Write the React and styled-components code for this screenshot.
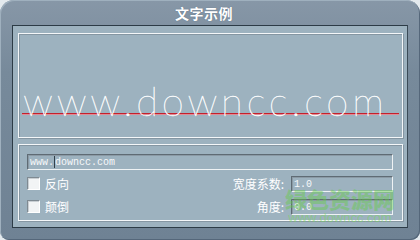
import React from "react";
import styled, { createGlobalStyle } from "styled-components";

const Global = createGlobalStyle`
  html, body {
    margin: 0;
    padding: 0;
    background: #e4eaee;
  }
  * { box-sizing: border-box; }
`;

const Window = styled.div`
  position: relative;
  width: 420px;
  height: 240px;
  border-radius: 14px 14px 9px 9px;
  background: linear-gradient(#8797a7, #778a9b 30%, #6f8294);
  box-shadow: inset 1px 1px 0 #9fb0be, inset -1px -1px 0 #55677a;
  padding: 0 12px 12px 12px;
  display: flex;
  flex-direction: column;
  overflow: hidden;
`;

const Title = styled.div`
  height: 25px;
  display: flex;
  align-items: center;
  justify-content: center;
  padding-right: 12px;
  color: #ffffff;
  font-family: "Noto Sans CJK SC", sans-serif;
  font-weight: 700;
  font-size: 14px;
  letter-spacing: 0.5px;
  text-shadow: 0 0 1px #55677a;
`;

const Panel = styled.div`
  flex: 1;
  background: #9db2bf;
  border: 1px solid #2c3b46;
  border-right-color: #3a4a56;
  padding: 7px 4px 6px 5px;
  display: flex;
  flex-direction: column;
  gap: 6px;
`;

const Group = styled.div`
  border: 1px solid #f4f7f9;
  box-shadow: inset 1px 1px 0 #8596a2, 1px 1px 0 #8596a2;
  height: ${(p) => p.h}px;
`;

const Preview = styled(Group)`
  display: flex;
  flex-direction: column;
  justify-content: flex-end;
  padding: 0 0 23px 3px;
`;

const Sample = styled.div`
  width: 377px;
  height: 36px;
  padding-left: 1px;
  font-family: Lato, "DejaVu Sans", sans-serif;
  font-weight: 100;
  font-size: 40px;
  letter-spacing: 3.8px;
  color: #ffffff;
  -webkit-text-stroke: 0.35px #ffffff;
  white-space: nowrap;
  border-bottom: 1px solid #c4202c;
  box-shadow: 0 1px 0 #e08a94;
  display: flex;
  align-items: flex-end;
`;

const SampleText = styled.span`
  display: block;
  line-height: 1;
  margin-bottom: -8px;
`;

const Controls = styled(Group)`
  padding: 9px 9px 0 8px;
  display: flex;
  flex-direction: column;
`;

const TextBox = styled.div`
  height: 16px;
  border: 1px solid;
  border-color: #5f6b74 #eef2f4 #eef2f4 #5f6b74;
  box-shadow: inset 1px 1px 0 #8b9aa5;
  display: flex;
  align-items: center;
  padding-left: 2px;
  font-family: "Liberation Mono", monospace;
  font-size: 10px;
  color: #f6f8fa;
`;

const Caret = styled.span`
  display: inline-block;
  width: 1px;
  height: 12px;
  background: #30404a;
`;

const Rows = styled.div`
  margin-top: 6px;
  display: grid;
  grid-template-columns: 1fr 102px;
  grid-auto-rows: 15px;
  row-gap: 8px;
`;

const Left = styled.div`
  display: flex;
  align-items: center;
  justify-content: space-between;
  padding-right: 7px;
`;

const Check = styled.label`
  display: flex;
  align-items: center;
  gap: 5px;
  font-family: "Noto Sans CJK SC", sans-serif;
  font-size: 12px;
  color: #ffffff;
`;

const Box = styled.span`
  width: 13px;
  height: 13px;
  background: #f2f4f5;
  border: 1px solid;
  border-color: #7f8a92 #ffffff #ffffff #7f8a92;
  box-shadow: inset 1px 1px 0 #c9cfd3;
`;

const FieldLabel = styled.span`
  font-family: "Noto Sans CJK SC", sans-serif;
  font-size: 12px;
  color: #ffffff;
`;

const Watermark = styled.div`
  position: absolute;
  left: 284px;
  top: 184px;
  width: 112px;
  display: flex;
  flex-direction: column;
  align-items: center;
  pointer-events: none;
`;

const MarkBig = styled.div`
  font-family: "Noto Sans CJK SC", sans-serif;
  font-weight: 900;
  font-size: 22px;
  line-height: 28px;
  color: rgba(100, 205, 70, 0.45);
`;

const MarkSmall = styled.div`
  font-family: "Liberation Sans", sans-serif;
  font-size: 13px;
  line-height: 12px;
  color: rgba(120, 215, 90, 0.5);
`;

export default function App() {
  return (
    <>
      <Global />
      <Window>
        <Title>文字示例</Title>
        <Panel>
          <Preview h={105}>
            <Sample>
              <SampleText>www.downcc.com</SampleText>
            </Sample>
          </Preview>
          <Controls h={77}>
            <TextBox>
              www.<Caret />downcc.com
            </TextBox>
            <Rows>
              <Left>
                <Check>
                  <Box />
                  反向
                </Check>
                <FieldLabel>宽度系数:</FieldLabel>
              </Left>
              <TextBox>1.0</TextBox>
              <Left>
                <Check>
                  <Box />
                  颠倒
                </Check>
                <FieldLabel>角度:</FieldLabel>
              </Left>
              <TextBox>0.0</TextBox>
            </Rows>
          </Controls>
        </Panel>
        <Watermark>
          <MarkBig>绿色资源网</MarkBig>
          <MarkSmall>www.downcc.com</MarkSmall>
        </Watermark>
      </Window>
    </>
  );
}
